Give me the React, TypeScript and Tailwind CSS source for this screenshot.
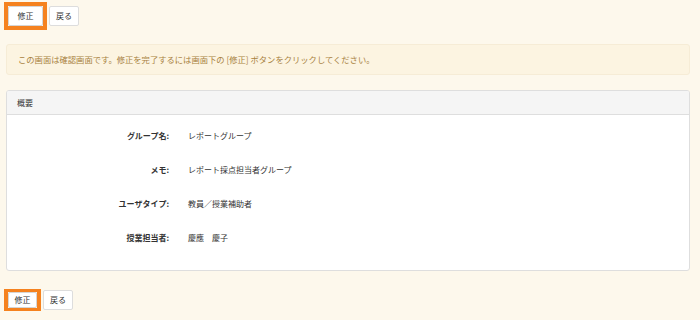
import React from "react";

const font = { fontFamily: '"Noto Sans CJK JP", "Noto Sans", sans-serif' };

const rows = [
  { label: "グループ名:", value: "レポートグループ" },
  { label: "メモ:", value: "レポート採点担当者グループ" },
  { label: "ユーザタイプ:", value: "教員／授業補助者" },
  { label: "授業担当者:", value: "慶應　慶子" },
];

function Buttons({ small }: { small?: boolean }) {
  return (
    <div className="flex items-center gap-[2px]">
      <span
        className={`flex border-[#f5821f] ${small ? "border-x-4 border-y-[3px]" : "border-4"}`}
      >
        <button
          className={`rounded-[2px] border border-[#d5d5d5] bg-white text-[8px] leading-none text-[#333] ${small ? "h-[16px] w-[29px]" : "h-[20px] w-[35px]"}`}
        >
          修正
        </button>
      </span>
      <button className="h-[20px] w-[30px] rounded-[2px] border border-[#ddd] bg-white text-[8px] leading-none text-[#333]">
        戻る
      </button>
    </div>
  );
}

export default function App() {
  return (
    <div className="min-h-[320px] w-[700px] bg-[#fdf8ec] pl-[6px] pr-[10px] pt-[2px]" style={font}>
      <div className="-ml-[2px]">
        <Buttons />
      </div>

      <div className="mt-[14px] flex h-[31px] items-center rounded-[3px] border border-[#f6ecd6] bg-[#fcf4e1] px-[11px] text-[8.3px] text-[#a8823f]">
        この画面は確認画面です。修正を完了するには画面下の [修正] ボタンをクリックしてください。
      </div>

      <div className="mt-[15px] h-[181px] overflow-hidden rounded-[3px] border border-[#dedede] bg-white">
        <div className="flex h-[24px] items-center border-b border-[#dedede] bg-[#f5f5f5] px-[10px] text-[8px] text-[#333]">
          概要
        </div>
        <div className="flex flex-col pt-[4px]">
          {rows.map((r) => (
            <div key={r.label} className="flex h-[34px] items-center text-[8px] text-[#333]">
              <div className="w-[162px] text-right font-bold">{r.label}</div>
              <div className="pl-[19px]">{r.value}</div>
            </div>
          ))}
        </div>
      </div>

      <div className="mt-[18px] -ml-[2px]">
        <Buttons small />
      </div>
    </div>
  );
}
